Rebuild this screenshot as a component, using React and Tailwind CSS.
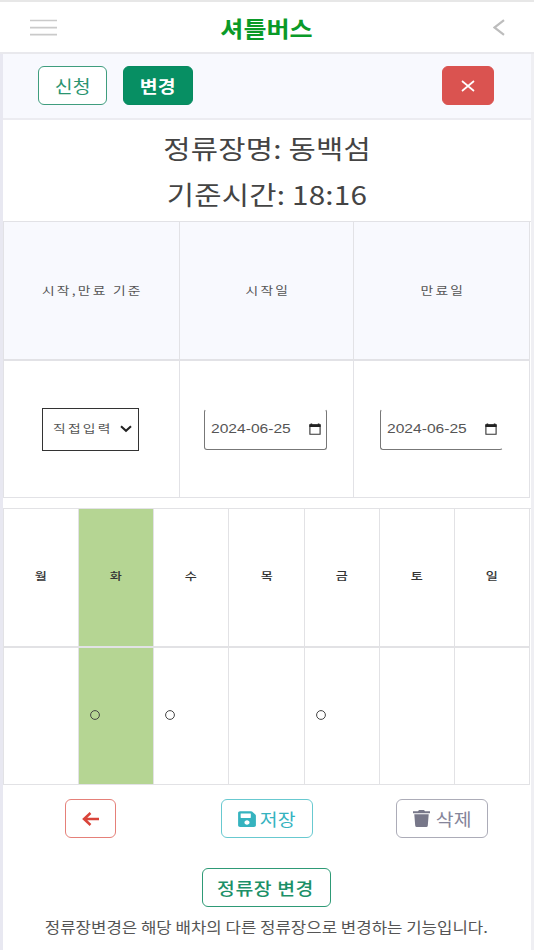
import { FaSave } from "react-icons/fa";

const days = [
  { name: "월", mark: false },
  { name: "화", mark: true, today: true },
  { name: "수", mark: true },
  { name: "목", mark: false },
  { name: "금", mark: true },
  { name: "토", mark: false },
  { name: "일", mark: false },
];

const Wide = ({ className = "", children }) => (
  <span className={`inline-block scale-x-[1.14] whitespace-nowrap ${className}`}>
    {children}
  </span>
);

const Button = ({ className, children }) => (
  <button
    type="button"
    className={`flex items-center justify-center h-[39px] rounded-md border text-[17px] leading-none ${className}`}
  >
    {children}
  </button>
);

const CellText = ({ children }) => (
  <span className="inline-block scale-x-[1.25] whitespace-nowrap text-[11px] tracking-[1.8px] mr-[-2px] pb-[1px] leading-none text-[#555]">
    {children}
  </span>
);

const CalendarIcon = () => (
  <svg width="12" height="12" viewBox="0 0 12 12" className="shrink-0">
    <path d="M.9 2h10.2v9.2H.9z" fill="none" stroke="#333" strokeWidth="1.1" />
    <path d="M.4 1.2h11.2v2.9H.4zM1.6.4h1.6v1.6H1.6zM8.8.4h1.6v1.6H8.8z" fill="#222" />
  </svg>
);

const DateInput = ({ className }) => (
  <div
    className={`flex items-center justify-between h-[41px] rounded-[3px] border border-t-transparent border-[#777] pl-[6px] pr-[5px] ${className}`}
  >
    <span className="inline-block origin-left scale-x-[1.3] whitespace-nowrap font-['Liberation_Sans'] text-[12px] leading-none text-[#555]">
      2024-06-25
    </span>
    <CalendarIcon />
  </div>
);

const Header = () => (
  <header className="flex items-center justify-between h-[54px] border-t-2 border-b-2 border-t-[#e7e7e7] border-b-[#e9e9ed] bg-white pl-[30px] pr-[29px]">
    <svg width="27" height="17" viewBox="0 0 27 17">
      <path d="M0 1.5h27M0 8.7h27M0 15.7h27" stroke="#cacaca" strokeWidth="1.7" />
    </svg>
    <h1 className="mr-[18px] pb-[1px] text-[22px] font-bold leading-none text-[#0a9a28]">
      <Wide>셔틀버스</Wide>
    </h1>
    <svg width="12" height="17" viewBox="0 0 12 17">
      <path d="M11 1.2 1.4 8.5 11 15.8" fill="none" stroke="#bdbdbd" strokeWidth="2.2" />
    </svg>
  </header>
);

const Period = () => (
  <div className="grid grid-cols-[176px_174px_176px] grid-rows-[139px_137px] border-l border-t border-[#e2e2e6]">
    {["시작,만료 기준", "시작일", "만료일"].map((title) => (
      <div
        key={title}
        className="flex items-center justify-center border-r border-b-2 border-[#e2e2e6] bg-[#f8f9fe]"
      >
        <CellText>{title}</CellText>
      </div>
    ))}
    <div className="flex items-center border-r border-b border-[#e2e2e6] pl-[38px]">
      <div className="flex items-center justify-between w-[97px] h-[43px] border border-[#333] pl-[16px] pr-[6px]">
        <CellText>직접입력</CellText>
        <svg width="12" height="8" viewBox="0 0 12 8">
          <path d="m1 1.2 5 4.6 5-4.6" fill="none" stroke="#222" strokeWidth="2" />
        </svg>
      </div>
    </div>
    <div className="flex items-center border-r border-b border-[#e2e2e6] pl-[24px]">
      <DateInput className="w-[123px]" />
    </div>
    <div className="flex items-center border-r border-b border-[#e2e2e6] pl-[26px]">
      <DateInput className="w-[123px] border-r-transparent" />
    </div>
  </div>
);

const Week = () => (
  <div className="grid grid-cols-[75px_75px_75px_76px_75px_75px_75px] grid-rows-[139px_137px] mt-[10px] border-l border-t border-[#e2e2e5]">
    {days.map((day) => (
      <div
        key={day.name}
        className={`flex items-center justify-center border-r border-b-2 border-[#e2e2e5] pb-[2px] ${day.today ? "bg-[#b5d593]" : ""}`}
      >
        <span className="inline-block scale-x-[1.25] text-[10.5px] font-medium leading-none text-[#333]">
          {day.name}
        </span>
      </div>
    ))}
    {days.map((day) => (
      <div
        key={day.name}
        className={`flex items-center border-r border-b border-[#e2e2e5] pl-[11px] pb-[3px] ${day.today ? "bg-[#b5d593]" : ""}`}
      >
        {day.mark && (
          <svg width="10" height="10" viewBox="0 0 10 10">
            <circle cx="5" cy="5" r="4.4" fill="none" stroke="#444" strokeWidth="1" />
          </svg>
        )}
      </div>
    ))}
  </div>
);

const App = () => {
  return (
    <div className="w-[534px] h-[950px] overflow-hidden bg-white font-['Noto_Sans_CJK_KR',sans-serif]">
      <Header />
      <main className="h-[896px] border-l-3 border-r-3 border-l-[#e8e8f1] border-r-[#efeff3]">
        <div className="flex items-center h-[66px] border-b-2 border-[#ececf1] bg-[#f8f9fe] pl-[35px] pr-[37px] pb-[1px]">
          <Button className="w-[69px] pb-[1px] border-[#3f9d7e] bg-white text-[#2a9470]">
            <Wide>신청</Wide>
          </Button>
          <Button className="ml-[16px] w-[70px] pb-[1px] border-[#078a60] bg-[#078f63] font-bold text-white">
            <Wide>변경</Wide>
          </Button>
          <Button className="ml-auto w-[52px] border-[#da5350] bg-[#da5350]">
            <svg width="14" height="12" viewBox="0 0 14 12">
              <path d="m1 1 12 10M13 1 1 11" stroke="#fff" strokeWidth="1.7" />
            </svg>
          </Button>
        </div>

        <div className="flex flex-col items-center h-[101px] pt-[5px] text-[26px] leading-[46px] text-[#444]">
          <Wide className="tracking-[0.2px]">정류장명: 동백섬</Wide>
          <Wide className="tracking-[0.2px]">기준시간: 18:16</Wide>
        </div>

        <Period />
        <Week />

        <div className="flex items-center pt-[14px] pl-[62px] pr-[43px]">
          <Button className="w-[51px] border-[#e58079]">
            <svg width="18" height="14" viewBox="0 0 18 14" className="mt-[1px]">
              <path d="M17 7H2M8.5 1 2 7l6.5 6" fill="none" stroke="#d9443a" strokeWidth="2.5" />
            </svg>
          </Button>
          <Button className="ml-[105px] w-[92px] gap-[7px] border-[#68c9d0] text-[#35b3bf]">
            <FaSave className="w-[16px] h-[18px] scale-x-[1.13]" />
            <Wide className="mr-[2px]">저장</Wide>
          </Button>
          <Button className="ml-auto w-[92px] gap-[8px] border-[#acacb8] text-[#85859a]">
            <svg width="17" height="17" viewBox="0 0 17 17" fill="#777789">
              <path d="M0 1.3h5L6 0h5l1 1.3h5v2H0zM1.3 4.3h14.4l-.9 11.2q-.1 1.5-1.6 1.5H3.8q-1.5 0-1.6-1.5z" />
            </svg>
            <Wide className="mr-[2px]">삭제</Wide>
          </Button>
        </div>

        <div className="flex justify-center pt-[30px] pr-[2px]">
          <Button className="w-[129px] border-[#2e9a76] text-[#1c9068] font-medium">
            <Wide className="tracking-[0.5px]">정류장 변경</Wide>
          </Button>
        </div>

        <p className="pt-[10px] pr-[2px] text-center text-[14.7px] leading-[20px] text-[#555]">
          <Wide>정류장변경은 해당 배차의 다른 정류장으로 변경하는 기능입니다.</Wide>
        </p>
      </main>
    </div>
  );
};

export default App;
